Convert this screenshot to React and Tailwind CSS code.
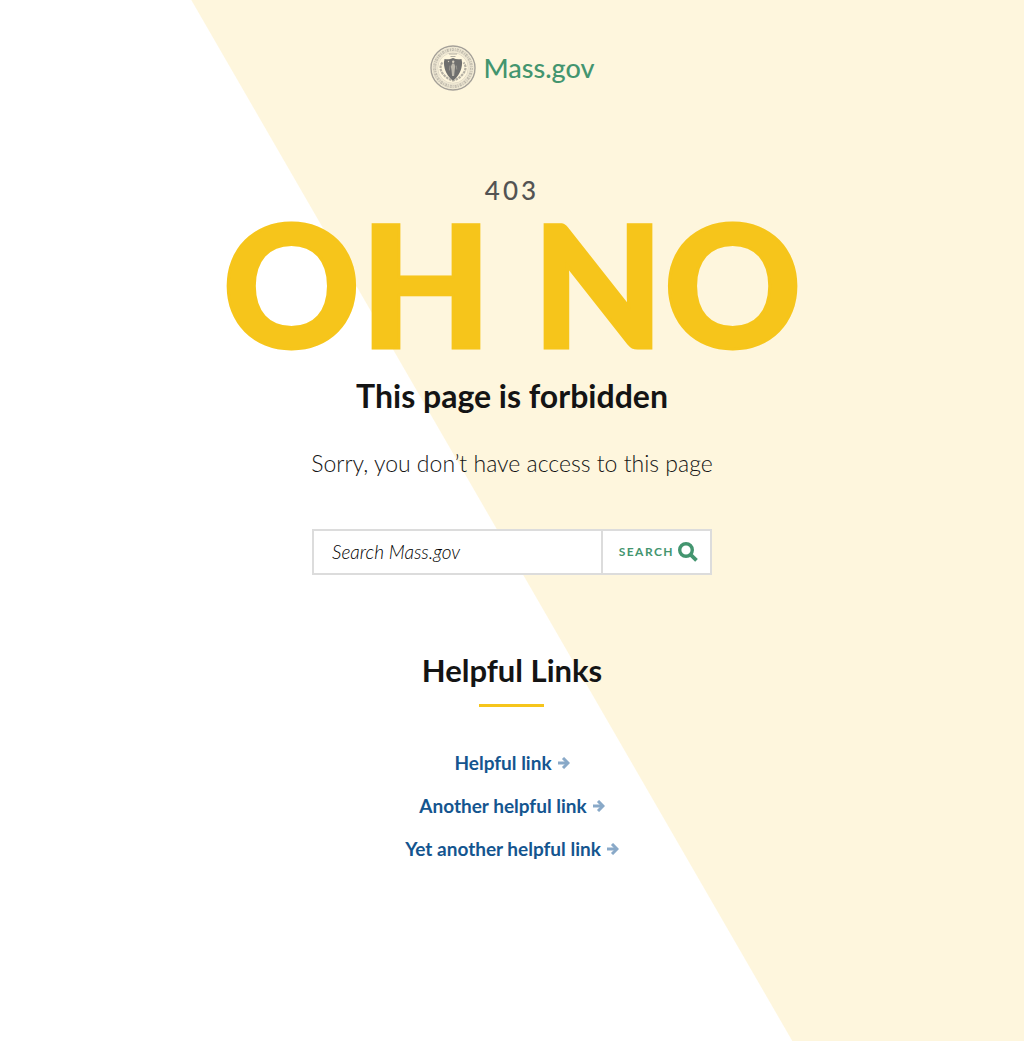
const links = ['Helpful link', 'Another helpful link', 'Yet another helpful link'];

function Seal() {
  return (
    <svg viewBox="0 0 46 46" className="size-[46px] shrink-0" fill="none" aria-hidden="true">
      <circle cx="23" cy="23" r="22" stroke="#a5a199" strokeWidth="1.400" />
      <circle cx="23" cy="23" r="18.400" stroke="#ebe4d0" strokeWidth="5" />
      <circle cx="23" cy="23" r="18.400" stroke="#bdb8aa" strokeWidth="2.800" strokeDasharray="1.9 1.2 0.9 1" />
      <circle cx="23" cy="23" r="18.400" stroke="#e3dcca" strokeWidth="1" strokeDasharray="2.1 0.9" />
      <circle cx="23" cy="23" r="15.300" stroke="#d5cebe" strokeWidth="0.7" />
      <path d="M19 9h8M20.500 11.500h5" stroke="#b3aea3" strokeWidth="1" />
      <path d="M12.500 17.500c-3 3-2.500 8.500 1 12 2.500 3 5.500 5 9.500 6 4-1 7-3 9.500-6 3.500-3.500 4-9 1-12" stroke="#b5b0a4" strokeWidth="2.200" strokeDasharray="2.600 0.800" />
      <path d="M14.500 13.900c3 .9 5.800.4 8.500-1 2.700 1.400 5.500 1.900 8.500 1l.6 3.700c-.2 8-3.700 14-9.100 18-5.400-4-8.900-10-9.100-18z" fill="#6f6f6e" />
      <path d="M22.200 18.500h2l1 3-.5 3.500-.6 6h-2l-.6-6-.6-3.500z" fill="#bdb8ac" />
      <path d="m20 20.500-.6 5M26.300 20.500l.5 4" stroke="#a39f96" strokeWidth="0.700" />
      <circle cx="23.200" cy="16.800" r="1.200" fill="#d5cebe" />
      <circle cx="18.500" cy="16.500" r="0.700" fill="#d5cebe" />
    </svg>
  );
}

function SearchIcon() {
  return (
    <svg viewBox="0 0 20 20" className="size-5 shrink-0" fill="none" stroke="#43956f" aria-hidden="true">
      <circle cx="8" cy="8" r="6.300" strokeWidth="3.400" />
      <path d="m12.300 12.300 6.200 6" strokeWidth="3.800" />
    </svg>
  );
}

function Arrow() {
  return (
    <svg viewBox="0 0 12 12" className="ml-1.5 size-3 shrink-0" fill="none" stroke="#89a9c8" strokeWidth="3" aria-hidden="true">
      <path d="M0 6h9" />
      <path d="M5 1l5 5-5 5" />
    </svg>
  );
}

export default function App() {
  return (
    <div className="flex min-h-screen flex-col items-center bg-[linear-gradient(60deg,#ffffff_calc(50%_-_18px),#fef6dd_calc(50%_-_17px))] px-4 pt-[45px] pb-16 font-['Lato','Open_Sans',sans-serif] text-[#141414]">
      <header>
        <a href="#" className="flex items-center gap-2 text-[27px] leading-[46px] font-medium text-[#43956f]">
          <Seal />
          <span>Mass.gov</span>
        </a>
      </header>
      <main className="flex w-full flex-col items-center text-center">
        <h1 className="mt-[83px] flex flex-col items-center">
          <span className="text-[26px] leading-8 font-medium tracking-[3px] text-[#535353]">403</span>
          <span className="mt-0.5 text-[170px] leading-[148px] font-black whitespace-nowrap text-[#f6c51b] [-webkit-text-stroke:3px]">OH NO</span>
        </h1>
        <h2 className="mt-5 text-[32px] leading-10 font-bold">This page is forbidden</h2>
        <p className="mt-[31px] text-[23px] leading-8 font-light">Sorry, you don’t have access to this page</p>
        <form className="mt-[50px] flex h-[46px] w-full max-w-[400px] border-2 border-[#dcdcdc] bg-white" onSubmit={(e) => e.preventDefault()}>
          <input
            type="search"
            aria-label="Search Mass.gov"
            placeholder="Search Mass.gov"
            className="min-w-0 flex-1 px-[18px] text-[19px] font-light italic outline-none placeholder:text-black"
          />
          <button type="submit" className="flex w-[109px] items-center justify-end gap-1 border-l-2 border-[#dcdcdc] pr-3 text-xs font-bold tracking-[0.12em] text-[#43956f]">
            SEARCH
            <SearchIcon />
          </button>
        </form>
        <section className="flex flex-col items-center">
          <h2 className="mt-[75px] text-[31px] leading-10 font-bold">Helpful Links</h2>
          <div className="mt-3.5 h-[3px] w-[65px] bg-[#f6c51b]" />
          <ul className="mt-[42px] flex flex-col items-center gap-[15px]">
            {links.map((label) => (
              <li key={label}>
                <a href="#" className="flex items-center text-[19px] leading-7 font-bold text-[#14558f]">
                  {label}
                  <Arrow />
                </a>
              </li>
            ))}
          </ul>
        </section>
      </main>
    </div>
  );
}
